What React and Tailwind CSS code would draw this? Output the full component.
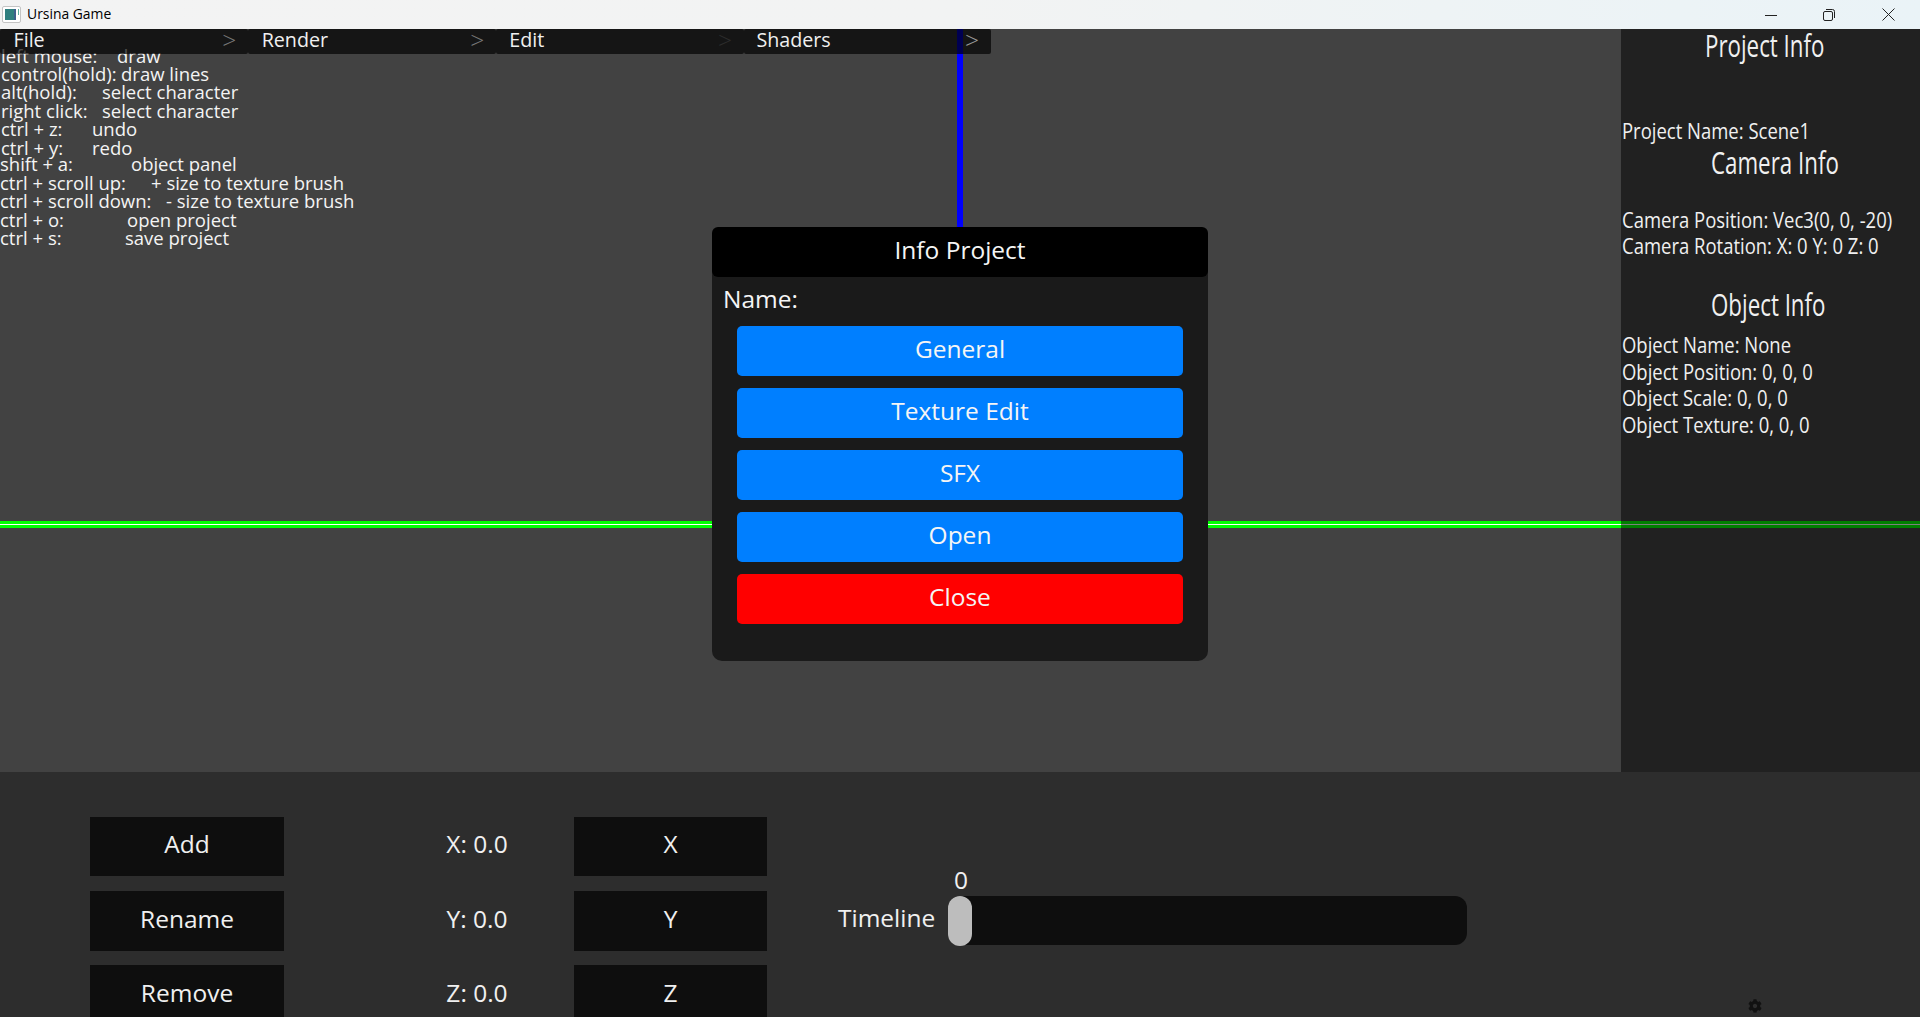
import { FaCog } from 'react-icons/fa'

const MENUS = [
  { label: 'File', arrow: 'text-[#777]', pad: 'pl-[13.5px]' },
  { label: 'Render', arrow: 'text-[#777]', pad: 'pl-[13.5px]' },
  { label: 'Edit', arrow: 'text-[#2c2c2c]', pad: 'pl-[13px]' },
  { label: 'Shaders', arrow: 'text-[#999]', pad: 'pl-[12.5px]' },
]

const HELP = [
  { key: 'left mouse:', val: 'draw', w: 'w-[116px]', x: 'pl-px' },
  { key: 'control(hold):', val: 'draw lines', w: 'w-[120px]', x: 'pl-px' },
  { key: 'alt(hold):', val: 'select character', w: 'w-[101px]', x: 'pl-px' },
  { key: 'right click:', val: 'select character', w: 'w-[101px]', x: 'pl-px' },
  { key: 'ctrl + z:', val: 'undo', w: 'w-[91px]', x: 'pl-px' },
  { key: 'ctrl + y:', val: 'redo', w: 'w-[91px]', x: 'pl-px' },
  { key: 'shift + a:', val: 'object panel', w: 'w-[131px]', x: '-mt-[1.5px]' },
  { key: 'ctrl + scroll up:', val: '+ size to texture brush', w: 'w-[151px]', x: '' },
  { key: 'ctrl + scroll down:', val: '- size to texture brush', w: 'w-[166px]', x: '' },
  { key: 'ctrl + o:', val: 'open project', w: 'w-[127px]', x: '' },
  { key: 'ctrl + s:', val: 'save project', w: 'w-[125px]', x: '' },
]

const MODAL_BUTTONS = [
  { label: 'General', color: 'bg-[#007fff]' },
  { label: 'Texture Edit', color: 'bg-[#007fff]' },
  { label: 'SFX', color: 'bg-[#007fff]' },
  { label: 'Open', color: 'bg-[#007fff]' },
  { label: 'Close', color: 'bg-[#ff0000]' },
]

// the three rows of the bottom panel are not quite the same height
const ROWS = [
  { h: 'h-[59px] pb-[4px] mb-[15px]', btn: 'Add', label: 'X: 0.0', axis: 'X' },
  { h: 'h-[60px] pb-[3px] mb-[14px]', btn: 'Rename', label: 'Y: 0.0', axis: 'Y' },
  { h: 'h-[59px] pb-[2px]', btn: 'Remove', label: 'Z: 0.0', axis: 'Z' },
]

function TitleBar() {
  return (
    <div className="h-[29px] shrink-0 flex items-center bg-gradient-to-r from-[#f3f3f3] via-[#f2f3f3] to-[#eaf3f7] text-black">
      <svg width="20" height="18" viewBox="0 0 20 18" className="ml-[2px]">
        <rect x="0.5" y="0.5" width="18" height="16" rx="1.5" fill="#fff" stroke="#c4c4c4" />
        <rect x="3" y="3" width="9" height="11" fill="#2f7f7f" />
        <rect x="12" y="3" width="2" height="11" fill="#3c5f8c" />
        <rect x="16" y="3" width="1" height="6" fill="#5fb0a0" />
      </svg>
      <span className="ml-[5px] text-[13.9px] font-['Open_Sans',sans-serif]">Ursina Game</span>
      <div className="ml-auto flex items-center">
        <svg width="12" height="12" viewBox="0 0 12 12" className="mr-[46px]">
          <path d="M0 6.5h12" stroke="#222" strokeWidth="1" />
        </svg>
        <svg width="12" height="12" viewBox="0 0 12 12" className="mr-[47px]" fill="none" stroke="#222">
          <rect x="0.5" y="2.5" width="9" height="9" rx="1.5" />
          <path d="M3 .5h6.5a2 2 0 0 1 2 2V9" />
        </svg>
        <svg width="13" height="13" viewBox="0 0 13 13" className="mr-[25px]">
          <path d="M.5.5l12 12M12.5.5l-12 12" stroke="#222" strokeWidth="1" />
        </svg>
      </div>
    </div>
  )
}

function MenuBar() {
  return (
    <div className="relative flex w-[991px] h-[25px]">
      {MENUS.map((m) => (
        <div
          key={m.label}
          className={`flex-1 flex items-start justify-between pr-[12px] rounded-[2px] bg-black/[.68] text-[19.7px] leading-[22px] text-[#f0f0f0] ${m.pad}`}
        >
          <span>{m.label}</span>
          <span className={`text-[24.5px] font-light ${m.arrow}`}>&gt;</span>
        </div>
      ))}
    </div>
  )
}

function HelpText() {
  return (
    <div className="-mt-[7.5px] text-[18.5px] leading-[18.4px] text-[#f4f4f4]">
      {HELP.map((row) => (
        <div key={row.key} className={`flex whitespace-nowrap ${row.x}`}>
          <span className={row.w}>{row.key}</span>
          <span>{row.val}</span>
        </div>
      ))}
    </div>
  )
}

function InfoHeading({ offset, children }) {
  return (
    <div className={`h-[34px] leading-[34px] text-[31px] text-[#f0f0f0] whitespace-nowrap origin-left scale-x-[0.72] ${offset}`}>
      {children}
    </div>
  )
}

function InfoRow({ children, top = '' }) {
  return (
    <div className={`h-[26.7px] leading-[26.7px] text-[22px] text-[#f0f0f0] whitespace-nowrap origin-left scale-x-[0.84] ${top}`}>
      {children}
    </div>
  )
}

function InfoPanel() {
  return (
    <div className="relative w-[299px] shrink-0 bg-black/50 pl-px">
      <InfoHeading offset="ml-[83px] -mt-px">Project Info</InfoHeading>
      <InfoRow top="mt-[55px]">Project Name: Scene1</InfoRow>
      <InfoHeading offset="ml-[89px] mt-px">Camera Info</InfoHeading>
      <InfoRow top="mt-[27px]">Camera Position: Vec3(0, 0, -20)</InfoRow>
      <InfoRow>Camera Rotation: X: 0 Y: 0 Z: 0</InfoRow>
      <InfoHeading offset="ml-[89px] mt-[28px]">Object Info</InfoHeading>
      <InfoRow top="mt-[10px]">Object Name: None</InfoRow>
      <InfoRow>Object Position: 0, 0, 0</InfoRow>
      <InfoRow>Object Scale: 0, 0, 0</InfoRow>
      <InfoRow>Object Texture: 0, 0, 0</InfoRow>
    </div>
  )
}

function InfoModal() {
  return (
    <div className="absolute left-[712px] top-[198px] w-[496px] h-[434px] rounded-[10px] bg-[#1a1a1a] text-[24.5px] text-[#f5f5f5]">
      <div className="h-[50px] pb-[4px] rounded-[6px] bg-black flex items-center justify-center">Info Project</div>
      <div className="h-[49px] pb-[5px] pl-[11px] flex items-center">Name:</div>
      <div className="flex flex-col gap-[12px] px-[25px]">
        {MODAL_BUTTONS.map((b) => (
          <div key={b.label} className={`h-[50px] pb-[4px] rounded-[5px] flex items-center justify-center ${b.color}`}>
            {b.label}
          </div>
        ))}
      </div>
    </div>
  )
}

function BottomPanel() {
  return (
    <div className="relative h-[245px] shrink-0 overflow-hidden bg-[#2d2d2d] text-[24.5px] text-[#f0f0f0] flex pl-[90px] pt-[45px]">
      <div className="flex flex-col">
        {ROWS.map((r) => (
          <div key={r.btn} className={`w-[194px] shrink-0 bg-[#0e0e0e] flex items-center justify-center ${r.h}`}>{r.btn}</div>
        ))}
      </div>
      <div className="ml-[96px] w-[194px] flex flex-col">
        {ROWS.map((r) => (
          <div key={r.label} className={`shrink-0 flex items-center justify-center ${r.h}`}>{r.label}</div>
        ))}
      </div>
      <div className="flex flex-col">
        {ROWS.map((r) => (
          <div key={r.axis} className={`w-[193px] shrink-0 bg-[#0e0e0e] flex items-center justify-center ${r.h}`}>{r.axis}</div>
        ))}
      </div>
      <div className="ml-[71px] mt-[79px] h-[49px] flex items-center">
        <span className="w-[110px] pb-[4px]">Timeline</span>
        <div className="relative w-[519px] h-[49px] rounded-[12px] bg-[#0e0e0e]">
          <div className="w-[24px] h-[50px] rounded-full bg-[#bdbdbd]" />
          <span className="absolute left-[6px] -top-[34px]">0</span>
        </div>
      </div>
      <FaCog className="absolute left-[1748px] top-[227px] text-[14px] text-[#111]" />
    </div>
  )
}

export default function App() {
  return (
    <div className="w-[1920px] h-[1017px] overflow-hidden flex flex-col font-['Open_Sans',sans-serif]">
      <TitleBar />
      <div className="relative flex-1 flex bg-[#424242]">
        {/* axis lines, drawn under the translucent panels */}
        <div className="absolute left-[957px] top-0 w-[6px] h-[198px] bg-[#0000ff]" />
        <div className="absolute left-0 right-0 top-[492px] h-[7px] bg-[#00ff00] flex items-center">
          <div className="w-full h-px bg-white" />
        </div>

        <div className="flex-1 min-w-0">
          <MenuBar />
          <HelpText />
        </div>
        <InfoPanel />
        <InfoModal />
      </div>
      <BottomPanel />
    </div>
  )
}
